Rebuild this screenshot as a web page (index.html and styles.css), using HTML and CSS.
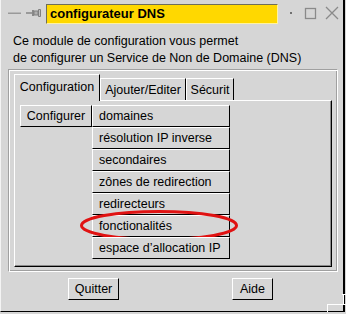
FILE: index.html
```html
<!DOCTYPE html>
<html>
<head>
<meta charset="utf-8">
<link rel="stylesheet" href="styles.css">
</head>
<body>
<div class="window">
  <div class="titlebar">
    <svg class="tb-left" width="45" height="28" viewBox="0 0 45 28">
      <rect x="7" y="12" width="13" height="2" fill="#9a9a9a"/>
      <rect x="7" y="12" width="13" height="1" fill="#b8b8b8"/>
      <rect x="25" y="12" width="7" height="2" fill="#9a9a9a"/>
      <rect x="31" y="10" width="2" height="6" fill="#8a8a8a"/>
      <path d="M33 11 L37 11 L37 15 L33 15 Z" fill="#b0b0b0" stroke="#808080" stroke-width="1"/>
      <path d="M37.5 9.5 L39.5 9.5 L39.5 16.5 L37.5 16.5 Z" fill="#c0c0c0" stroke="#808080" stroke-width="1"/>
    </svg>
    <div class="title">configurateur DNS</div>
    <svg class="tb-right" width="65" height="28" viewBox="0 0 65 28">
      <rect x="12" y="12" width="2" height="2" fill="#707070"/>
      <rect x="27.5" y="8.5" width="10" height="10" fill="none" stroke="#8a8a8a" stroke-width="1.3"/>
      <path d="M48 7 L60 19 M60 7 L48 19" stroke="#8a8a8a" stroke-width="1.3" fill="none"/>
    </svg>
  </div>
  <div class="desc">
    <div>Ce module de configuration vous permet</div>
    <div>de configurer un Service de Non de Domaine (DNS)</div>
  </div>
  <div class="group">
    <div class="tabs">
      <div class="tab tab-active tab-cfg">Configuration</div>
      <div class="tab tab-add">Ajouter/Editer</div>
      <div class="tab tab-sec">Sécurit</div>
    </div>
    <div class="pane">
      <div class="btn btn-cfg">Configurer</div>
      <div class="list">
        <div class="btn item">domaines</div>
        <div class="btn item">résolution IP inverse</div>
        <div class="btn item">secondaires</div>
        <div class="btn item">zônes de redirection</div>
        <div class="btn item">redirecteurs</div>
        <div class="btn item item-hl">fonctionalités
          <svg class="ring" width="159" height="32" viewBox="0 0 159 32">
            <ellipse cx="79" cy="15.5" rx="77.5" ry="14" fill="none" stroke="#e01212" stroke-width="3"/>
          </svg>
        </div>
        <div class="btn item">espace d’allocation IP</div>
      </div>
    </div>
  </div>
  <div class="actions">
    <div class="btn act act-quit">Quitter</div>
    <div class="btn act act-help">Aide</div>
  </div>
  <svg class="grip" width="20" height="22" viewBox="0 0 20 22">
    <path d="M17.5 2 V12.5 M16 2.5 H20 M1 12.5 H20 M1.5 12 V22" stroke="#fff" stroke-width="1" fill="none"/>
  </svg>
</div>
</body>
</html>
```

FILE: styles.css
```css
* { box-sizing: border-box; }

body {
  margin: 0;
  background: #d6d6d6;
  font-family: "Liberation Sans", Arial, sans-serif;
  font-size: 12.5px;
  color: #000;
}

.window {
  position: relative;
  width: 345px;
  height: 312px;
  border-left: 1px solid #f4f4f4;
  border-right: 2px solid #000;
  border-bottom: 1px solid #000;
  display: flex;
  flex-direction: column;
}

.titlebar {
  height: 28px;
  display: flex;
  align-items: flex-start;
}

.tb-left, .tb-right { display: block; flex: none; }

.title {
  flex: none;
  width: 232px;
  height: 20px;
  margin-top: 4px;
  background: #ffd800;
  border-top: 1px solid #6e6e5a;
  border-left: 1px solid #6e6e5a;
  border-right: 1px solid #fff3a0;
  border-bottom: 1px solid #fff3a0;
  font-weight: bold;
  font-size: 13px;
  line-height: 17px;
  padding-left: 3px;
}

.desc {
  padding: 5px 0 0 12px;
  line-height: 17px;
  height: 41px;
}

.group {
  margin-left: 7px;
  width: 330px;
  height: 203px;
  border-top: 1px solid #a0a0a0;
  border-left: 1px solid #a0a0a0;
  border-right: 1px solid #fff;
  border-bottom: 1px solid #fff;
  box-shadow: inset 1px 1px #fff, inset -1px -1px #a0a0a0;
  padding: 4px 5px 4px 5px;
  display: flex;
  flex-direction: column;
}

.tabs {
  display: flex;
  align-items: flex-end;
  height: 26px;
}

.tab {
  height: 22px;
  line-height: 22px;
  border-top: 1px solid #fff;
  border-left: 1px solid #fff;
  border-right: 1px solid #000;
  text-align: center;
  background: #d6d6d6;
}

.tab-active {
  position: relative;
  z-index: 1;
  height: 27px;
  margin-bottom: -1px;
  line-height: 25px;
}

.tab-cfg { width: 86px; }
.tab-add { width: 86px; }
.tab-sec { width: 48px; }

.pane {
  flex: 1;
  border-top: 1px solid #fff;
  border-left: 1px solid #fff;
  border-right: 1px solid #000;
  border-bottom: 1px solid #000;
  box-shadow: inset -1px -1px #8a8a8a;
  padding: 4px 0 0 5px;
  display: flex;
  align-items: flex-start;
}

.btn {
  height: 22px;
  line-height: 21px;
  background: #d6d6d6;
  border-top: 1px solid #fff;
  border-left: 1px solid #fff;
  border-right: 1px solid #000;
  border-bottom: 1px solid #000;
  white-space: nowrap;
}

.btn-cfg {
  width: 72px;
  text-align: center;
}

.list {
  width: 138px;
  display: flex;
  flex-direction: column;
}

.item {
  padding-left: 6px;
  position: relative;
}

.ring {
  position: absolute;
  left: -13px;
  top: -6px;
  overflow: visible;
}

.actions {
  display: flex;
  margin-top: 6px;
  padding-left: 67px;
}

.act { text-align: center; }
.act-quit { width: 51px; }
.act-help { width: 41px; margin-left: 113px; }

.grip {
  position: absolute;
  left: 325px;
  top: 292px;
  overflow: visible;
}
```
